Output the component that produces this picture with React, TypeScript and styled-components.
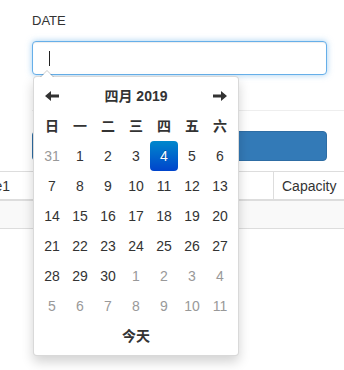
import React, { FC } from 'react';
import styled, { createGlobalStyle, css } from 'styled-components';

const GlobalStyle = createGlobalStyle`
  html, body {
    margin: 0;
    padding: 0;
    background: #fff;
    overflow: hidden;
  }
  body {
    font-family: "Liberation Sans", "Noto Sans CJK SC", Arial, sans-serif;
    font-size: 14px;
    line-height: 20px;
    color: #333;
  }
`;

const Page = styled.div`
  width: 344px;
  height: 370px;
  padding-top: 11px;
  box-sizing: border-box;
  overflow: hidden;
`;

const FormGroup = styled.div`
  padding: 0 17px 0 32px;
`;

const Label = styled.label`
  display: block;
  font-size: 13px;
  line-height: 19px;
  margin-bottom: 11px;
  text-transform: uppercase;
`;

const InputWrap = styled.div`
  position: relative;
`;

const FakeInput = styled.div`
  height: 34px;
  box-sizing: border-box;
  display: flex;
  align-items: center;
  padding: 0 16px;
  border: 1px solid #66afe9;
  border-radius: 4px;
  background: #fff;
  box-shadow: inset 0 1px 1px rgba(0, 0, 0, 0.075), 0 0 6px rgba(102, 175, 233, 0.6);
`;

const Caret = styled.span`
  display: block;
  width: 1px;
  height: 15px;
  background: #222;
`;

const Section = styled.div`
  margin: 35px 0 0 32px;
  border-top: 1px solid #eee;
  padding: 20px 17px 0 0;
`;

const PrimaryButton = styled.button`
  display: block;
  width: 100%;
  height: 30px;
  border: 1px solid #2e6da4;
  border-radius: 4px;
  background: #337ab7;
  color: #fff;
  font: inherit;
  padding: 0;
`;

const TableWrap = styled.div`
  margin-top: 10px;
  overflow: hidden;
`;

const Table = styled.table`
  margin-left: -44px;
  border-collapse: collapse;
  table-layout: fixed;
  width: 437px;
`;

const Th = styled.th<{ $w: number }>`
  box-sizing: border-box;
  width: ${p => p.$w}px;
  text-align: left;
  font-weight: normal;
  padding: 4px 8px 3px;
  border-top: 1px solid #ddd;
  border-left: 1px solid #ddd;
  border-bottom: 2px solid #ddd;
  white-space: nowrap;
  overflow: hidden;
`;

const Td = styled.td`
  height: 20px;
  padding: 4px 8px 3px;
  background: #f9f9f9;
  border-bottom: 1px solid #ddd;
`;

const Picker = styled.div`
  position: absolute;
  top: calc(100% + 1px);
  left: 1px;
  z-index: 10;
  padding: 4px;
  background: #fff;
  border: 1px solid rgba(0, 0, 0, 0.15);
  border-radius: 4px;
  box-shadow: 0 6px 12px rgba(0, 0, 0, 0.175);

  &::before {
    content: '';
    position: absolute;
    top: -7px;
    left: 6px;
    border-left: 7px solid transparent;
    border-right: 7px solid transparent;
    border-bottom: 7px solid rgba(0, 0, 0, 0.2);
  }
  &::after {
    content: '';
    position: absolute;
    top: -6px;
    left: 7px;
    border-left: 6px solid transparent;
    border-right: 6px solid transparent;
    border-bottom: 6px solid #fff;
  }
`;

const Grid = styled.div`
  display: grid;
  grid-template-columns: repeat(7, 28px);
  grid-auto-rows: 30px;
`;

const Cell = styled.div<{ $span?: number; $bold?: boolean; $muted?: boolean; $active?: boolean }>`
  grid-column: span ${p => p.$span ?? 1};
  display: flex;
  align-items: center;
  justify-content: center;
  border-radius: 4px;
  font-weight: ${p => (p.$bold ? 'bold' : 'normal')};
  color: ${p => (p.$muted ? '#999' : '#333')};
  ${p => p.$active && css`
    color: #fff;
    background: linear-gradient(to bottom, #0088cc, #0044cc);
    text-shadow: 0 -1px 0 rgba(0, 0, 0, 0.25);
  `}
`;

const Arrow: FC<{ dir: 'left' | 'right' }> = ({ dir }) => (
  <svg width="14" height="10" viewBox="0 0 14 10"
    style={dir === 'right' ? { transform: 'scaleX(-1)' } : undefined}>
    <path d="M0 5 L6 0 L6 3.5 L14 3.5 L14 6.5 L6 6.5 L6 10 Z" fill="#333" />
  </svg>
);

const weekDays = ['日', '一', '二', '三', '四', '五', '六'];

const days: { n: number; muted?: boolean }[] = [
  { n: 31, muted: true },
  ...Array.from({ length: 30 }, (_, i) => ({ n: i + 1 })),
  ...Array.from({ length: 11 }, (_, i) => ({ n: i + 1, muted: true })),
];

const DatePicker: FC = () => (
  <Picker>
    <Grid>
      <Cell><Arrow dir="left" /></Cell>
      <Cell $span={5} $bold>四月 2019</Cell>
      <Cell><Arrow dir="right" /></Cell>
      {weekDays.map(d => <Cell key={d} $bold>{d}</Cell>)}
      {days.map((d, i) => (
        <Cell key={i} $muted={d.muted} $active={!d.muted && d.n === 4}>{d.n}</Cell>
      ))}
      <Cell $span={7} $bold>今天</Cell>
    </Grid>
  </Picker>
);

export default function App() {
  return (
    <Page>
      <GlobalStyle />
      <FormGroup>
        <Label>Date</Label>
        <InputWrap>
          <FakeInput><Caret /></FakeInput>
          <DatePicker />
        </InputWrap>
      </FormGroup>
      <Section>
        <PrimaryButton type="button" aria-label="Submit" />
      </Section>
      <TableWrap>
        <Table>
          <thead>
            <tr>
              <Th $w={120}>Name1</Th>
              <Th $w={197} />
              <Th $w={120}>Capacity</Th>
            </tr>
          </thead>
          <tbody>
            <tr>
              <Td colSpan={3} />
            </tr>
          </tbody>
        </Table>
      </TableWrap>
    </Page>
  );
}
